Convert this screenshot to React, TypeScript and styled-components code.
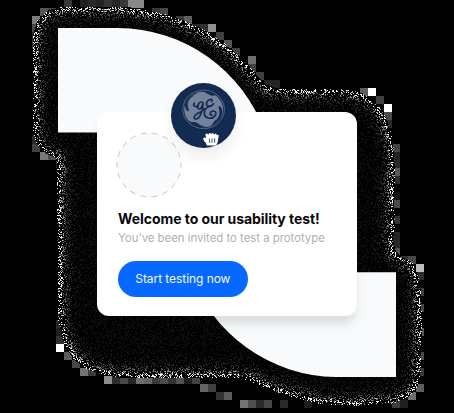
import React from "react";
import styled, { createGlobalStyle } from "styled-components";

const GlobalStyle = createGlobalStyle`
  html, body { margin: 0; background: #000; }
  body { overflow: hidden; font-family: "Inter", "Liberation Sans", sans-serif; }
`;

const Stage = styled.main`
  position: relative;
  box-sizing: border-box;
  width: 454px;
  height: 413px;
  padding: 112.4px 0 0 97px;
  background: #000;
`;

const Backdrop = styled.svg`
  position: absolute;
  inset: 0;
  display: block;
`;

const Card = styled.section`
  position: relative;
  box-sizing: border-box;
  display: flex;
  flex-direction: column;
  align-items: flex-start;
  width: 260px;
  height: 203.2px;
  padding: 19.2px 20px 0 19px;
  border-radius: 12px;
  background: #fff;
`;

const DropTarget = styled.svg`
  display: block;
  width: 66px;
  height: 66px;
`;

const Title = styled.h1`
  margin: 11.2px 0 0 2px;
  font-size: 14px;
  line-height: 20px;
  font-weight: 700;
  color: #070809;
  white-space: nowrap;
  letter-spacing: -0.06px;
`;

const Subtitle = styled.p`
  margin: 0 0 0 2px;
  font-size: 11.4px;
  line-height: 18px;
  color: #adb0b5;
  white-space: nowrap;
  letter-spacing: -0.02px;
`;

const StartButton = styled.button`
  margin: 13.8px 0 0 1.8px;
  padding: 0;
  width: 130px;
  height: 36.4px;
  border: 0;
  border-radius: 19px;
  background: #0768ff;
  color: #f4f8ff;
  font: 400 12px/36px "Inter", "Liberation Sans", sans-serif;
  letter-spacing: -0.06px;
  white-space: nowrap;
`;

const DraggedLogo = styled.div`
  position: absolute;
  left: 74px;
  top: -29.7px;
  width: 65px;
  height: 65px;
  border-radius: 50%;
  background: #132b50;
  box-shadow: 0 9px 14px rgba(20, 30, 40, 0.08);
  svg { display: block; }
`;

type Point = [number, number];

const haloOutline: Point[] = [
  [48, 10], [63, 7], [128, 7], [150, 11], [168, 15], [185, 21], [208, 32], [224, 43],
  [238, 55], [250, 67], [258, 77], [265, 84], [275, 88], [290, 89], [345, 89], [362, 93],
  [378, 105], [387, 119], [391, 133], [394, 150], [395, 170], [394, 200], [395, 225],
  [393, 240], [396, 252], [402, 257], [412, 262], [418, 275], [421, 290], [422, 330],
  [421, 370], [418, 386], [409, 397], [392, 404], [350, 406], [320, 404], [296, 398],
  [270, 390], [248, 380], [235, 378], [120, 378], [100, 374], [85, 368], [73, 359],
  [64, 343], [58, 320], [57, 165], [56, 158], [45, 153], [36, 143], [33, 130],
  [33, 36], [37, 21],
];

// Column and row on an 8px grid, then grey level.
const mosaic: [number, number, number][] = [
  [8, 0, 55], [10, 0, 32], [11, 0, 42], [12, 0, 34], [13, 0, 52], [14, 0, 38], [15, 0, 57],
  [16, 0, 136], [17, 0, 136], [5, 1, 85], [6, 1, 72], [7, 1, 92], [4, 2, 125],
  [4, 3, 75], [4, 4, 40], [4, 5, 56], [19, 1, 55], [20, 1, 72], [22, 2, 57], [23, 2, 96],
  [24, 3, 40], [25, 3, 48], [26, 3, 145], [27, 4, 65], [28, 5, 85], [29, 6, 65],
  [31, 7, 112], [31, 8, 65], [32, 9, 64], [33, 10, 38], [34, 10, 35],
  [45, 11, 95], [46, 11, 255], [47, 12, 64], [48, 13, 255], [48, 14, 75], [48, 15, 42],
  [49, 18, 67], [49, 19, 35], [49, 20, 42], [49, 21, 90], [49, 22, 43], [49, 24, 18],
  [49, 25, 75], [49, 27, 54], [49, 29, 37], [49, 30, 40], [49, 31, 82],
  [50, 32, 54], [51, 32, 70], [52, 33, 190], [52, 34, 45], [52, 36, 64], [52, 38, 72],
  [52, 41, 88], [52, 44, 75], [52, 46, 60], [52, 48, 95], [51, 49, 110],
  [50, 50, 32], [49, 50, 62], [4, 17, 42], [4, 18, 65], [5, 19, 120], [6, 19, 80],
  [7, 20, 42], [7, 40, 42], [7, 41, 31], [7, 42, 47], [7, 43, 255], [8, 44, 92], [9, 45, 70],
  [10, 46, 115], [11, 46, 60], [13, 47, 142], [14, 47, 45], [15, 47, 72], [16, 47, 36],
  [17, 47, 110], [18, 47, 100], [19, 47, 58], [20, 47, 78], [21, 47, 50], [22, 47, 80],
  [23, 47, 30], [24, 47, 66], [25, 48, 100], [26, 48, 65], [27, 49, 52], [28, 49, 90],
  [30, 50, 115], [31, 50, 80], [32, 50, 42], [33, 50, 70], [35, 50, 42], [38, 50, 30],
];

function insideOutline(x: number, y: number) {
  let inside = false;
  haloOutline.forEach(([ax, ay], i) => {
    const [bx, by] = haloOutline[(i + 1) % haloOutline.length];
    if (ay > y !== by > y && x < ((bx - ax) * (y - ay)) / (by - ay) + ax) inside = !inside;
  });
  return inside;
}

function edgeDistance(x: number, y: number) {
  let best = Infinity;
  haloOutline.forEach(([ax, ay], i) => {
    const [bx, by] = haloOutline[(i + 1) % haloOutline.length];
    const dx = bx - ax;
    const dy = by - ay;
    const t = Math.max(0, Math.min(1, ((x - ax) * dx + (y - ay) * dy) / (dx * dx + dy * dy)));
    best = Math.min(best, Math.hypot(x - ax - t * dx, y - ay - t * dy));
  });
  return best;
}

// Grain is brightest at the rim and fades toward the card.
function buildGrain() {
  const layers: Record<number, string[]> = {};
  let seed = 7411;
  const random = () => {
    seed = (Math.imul(seed, 1664525) + 1013904223) >>> 0;
    return seed / 4294967296;
  };
  for (let y = 6; y < 408; y++) {
    for (let x = 30; x < 425; x++) {
      if (!insideOutline(x + 0.5, y + 0.5)) continue;
      const d = edgeDistance(x + 0.5, y + 0.5);
      const present = random() < (d < 1.5 ? 0.25 : 0.42);
      const strength = random();
      if (!present) continue;
      const peak = d < 4 ? 480 : 22 + 330 * Math.exp(-(d - 3) / 4.2);
      const raw = d > 32 ? 7 + strength * 7 : strength * peak;
      const level = Math.min(255, Math.round(raw / 15) * 15);
      if (level < 8) continue;
      (layers[level] ||= []).push(`M${x} ${y}h1v1h-1z`);
    }
  }
  return Object.entries(layers).map(([level, cells]) => ({ level, d: cells.join("") }));
}

const grain = buildGrain();

function Scenery() {
  return (
    <Backdrop width="454" height="413" viewBox="0 0 454 413" aria-hidden="true">
      <defs>
        <clipPath id="leaves">
          <path d="M58 28H118A157 157 0 0 1 265 132.5H58Z" />
          <path d="M396 377H336A157 157 0 0 1 190 272.3H396Z" />
        </clipPath>
        <filter id="soft" x="-20%" y="-20%" width="140%" height="150%">
          <feGaussianBlur stdDeviation="6" />
        </filter>
      </defs>
      <g shapeRendering="crispEdges">
        {mosaic.map(([col, row, grey]) => (
          <rect key={`${col}-${row}`} x={col * 8} y={row * 8} width="8" height="8" fill={`rgb(${grey},${grey},${grey})`} />
        ))}
        <path d={`M${haloOutline.map((p) => p.join(" ")).join("L")}Z`} fill="#000" />
        {grain.map(({ level, d }) => (
          <path key={level} d={d} fill={`rgb(${level},${level},${level})`} />
        ))}
      </g>
      <g clipPath="url(#leaves)">
        <rect width="454" height="413" fill="#f8fafb" />
        <rect x="99" y="124" width="256" height="200" rx="12" fill="#202b2b" opacity=".14" filter="url(#soft)" />
      </g>
    </Backdrop>
  );
}

function LogoArt() {
  return (
    <svg width="65" height="65" viewBox="171 82.7 65 65" fill="none" aria-label="GE">
      <ellipse cx="203.6" cy="109.1" rx="20.8" ry="19.2" stroke="#66758f" strokeWidth=".8" />
      <ellipse cx="203.6" cy="109.1" rx="19.4" ry="17.9" fill="#74829a" />
      <g fill="#132b50">
        <path d="M185.4 103C188 97 192 94.3 197.5 92.2C195.5 94.2 192.5 94.7 193.2 95.9C189 98 187.8 101.8 187.7 104.2C187.7 108 189.8 109.3 188.2 111.3C185.8 109.8 184.5 106.5 185.4 103Z" />
        <path d="M200 91C207 90 213 92 217 95.4C214.6 94.3 213.5 95.8 212 95.4C208 94.8 207 91.6 200 91Z" />
        <path d="M219.3 105.5C222.5 107.5 222.9 111 221.7 115C219.8 120 216.2 123.2 210.5 125.7C213.5 122.6 214.2 121.8 213.9 121.2C218 118.8 219.8 115 219.5 111.5C219.4 109 217.7 107.4 219.3 105.5Z" />
        <path d="M188.5 120.5C192 122.4 192.4 121.5 194.5 121.7C197.5 121.9 200.2 126.4 206.4 126.5C199.2 128 192.5 125.8 188.5 120.5Z" />
      </g>
      <g stroke="#132b50" strokeWidth="1.65" strokeLinecap="round" strokeLinejoin="round">
        <path d="M203.2 103.4C202.7 100.9 199.8 101.2 198.3 104.1C196.3 107.8 198.8 110.4 201.1 107.4C202.6 105.4 203.3 102.6 203.2 103.4C202.5 108.7 201.6 117.3 196.8 118.6C193.3 119.4 193.5 115.8 196.3 114.1C199.5 112.1 203 110.5 204.4 108.3" />
        <path d="M198.2 105.9C195 107.2 192.7 105.3 194.3 102.9" />
        <path d="M211.5 101.2C213.6 98.6 209.8 98.3 207.8 100.4C205.2 103.2 206.7 106.5 209.1 105.9C206.1 107 203.6 110.7 204.5 114.2C205.5 118.5 212 119.3 215.1 115.6C217.2 113 215.3 109.8 212.1 111C209.1 112.1 209.8 115.7 212.1 114.5" />
        <path d="M208.1 106.2C210.1 106.4 212.6 104.9 213.5 103.5" />
      </g>
      <path d="M203 138.3Q204.4 136.5 206.2 137.6L205.4 134.3Q206.6 132.2 208.3 134.4Q209.3 131.5 211.2 133.8Q212.6 131.5 214.3 134.3Q216.3 131.9 216.8 134.8Q219.2 133.4 218.6 136.2L217.8 141.5L216.2 145.3H207L205.5 142.3Q203.8 141.1 203 138.3Z" fill="#fff" />
      <path d="M209.3 138.3L209.7 142.6M212 138.1V142.6M214.7 138V142.5" stroke="#132b50" strokeWidth=".8" />
    </svg>
  );
}

export default function App() {
  return (
    <>
      <GlobalStyle />
      <Stage>
        <Scenery />
        <Card>
          <DropTarget viewBox="0 0 66 66" aria-hidden="true">
            <circle cx="33" cy="33" r="32" fill="#f8fafb" stroke="#cfd2d2" strokeWidth="1.1" strokeDasharray="6.05 5.12" strokeDashoffset="3" />
          </DropTarget>
          <Title>Welcome to our usability test!</Title>
          <Subtitle>You’ve been invited to test a prototype</Subtitle>
          <StartButton>Start testing now</StartButton>
          <DraggedLogo><LogoArt /></DraggedLogo>
        </Card>
      </Stage>
    </>
  );
}
